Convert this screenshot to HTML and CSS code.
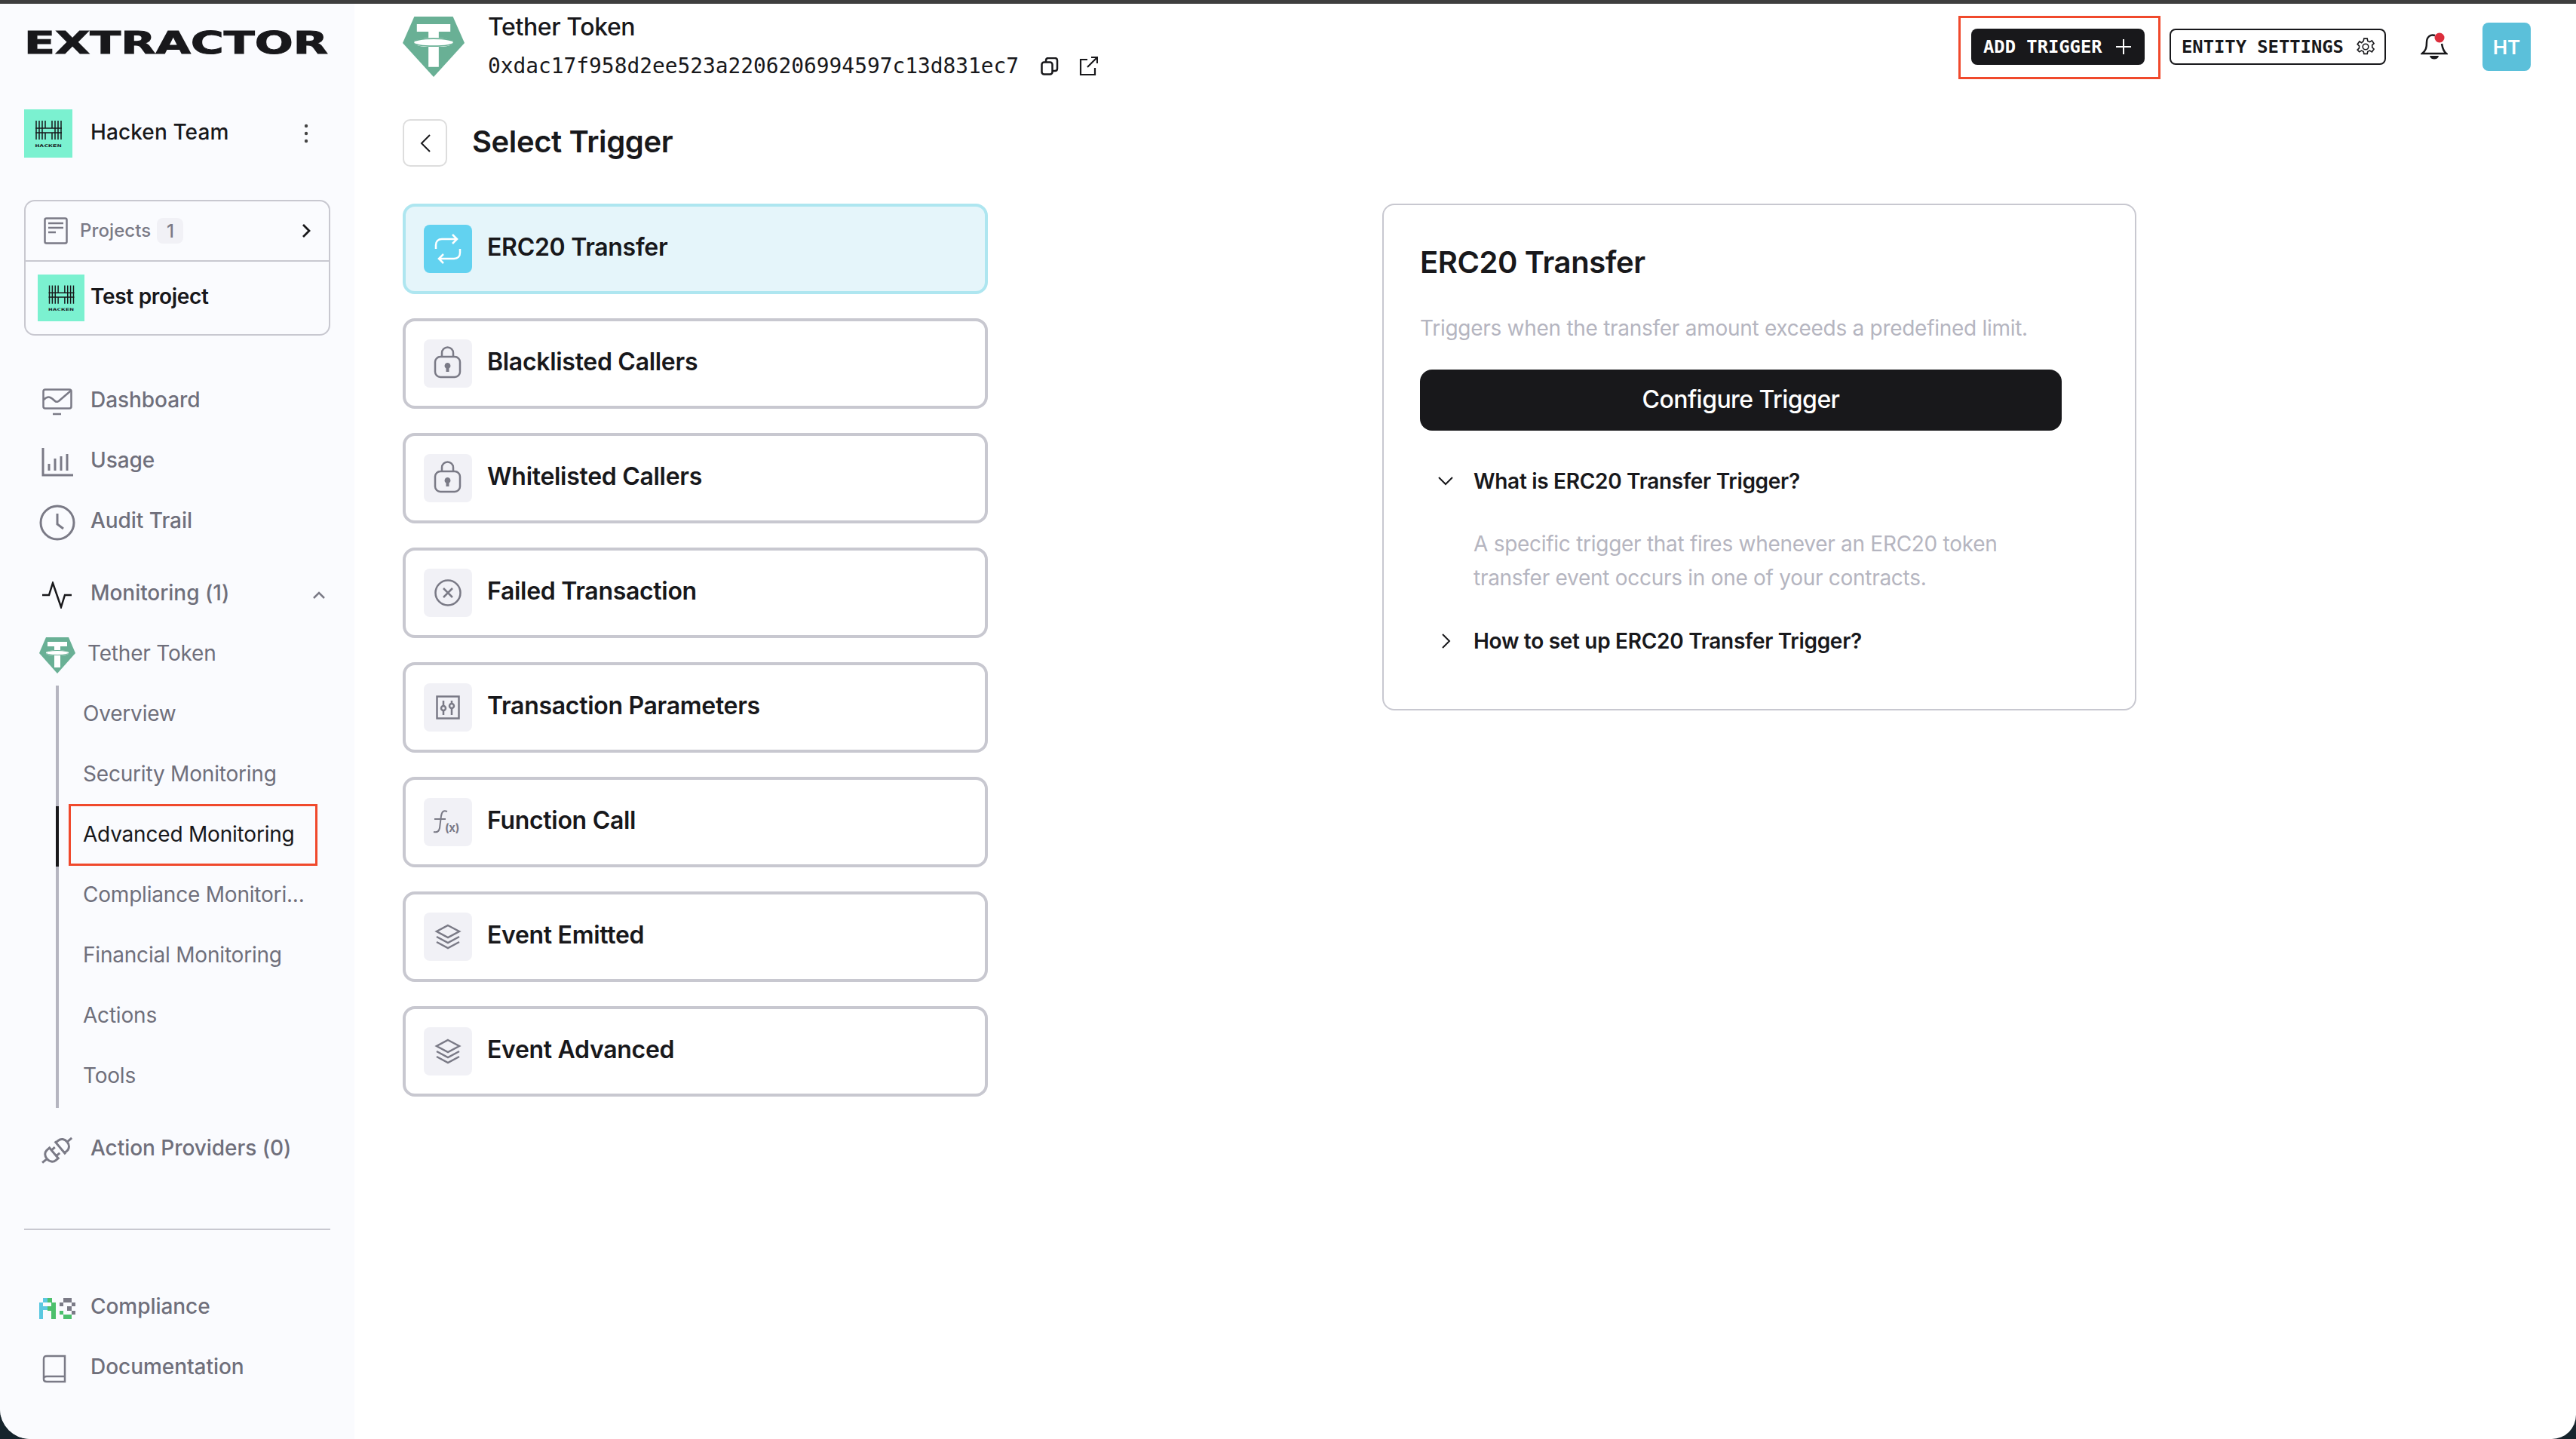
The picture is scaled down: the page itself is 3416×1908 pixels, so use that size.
FILE: index.html
```html
<!DOCTYPE html>
<html>
<head>
<meta name="viewport" content="width=device-width, initial-scale=1">
<title>Select Trigger</title>
<link rel="stylesheet" href="styles.css">
</head>
<body>
<svg class="defs" width="0" height="0">
  <symbol id="hacken" viewBox="0 0 64 64">
    <g fill="none" stroke="#18181b" stroke-width="1.500">
      <path d="M16 15v25M20 15v25M24 15v25M41 15v25M45 15v25M49 15v25"/>
      <path d="M15 25h35M15 31h35"/>
      <path d="M28 15v10M37 15v10M28 31v9M37 31v9"/>
    </g>
  </symbol>
  <symbol id="tether" viewBox="0 0 48 48">
    <path fill="#69b095" d="M9 0h30l9 21-24 27L0 21z"/>
    <path fill="#fff" d="M11 6h26v6H28v5c3 0 6 1 11 2v3c-5 2-8 2-11 2v16h-8V24c-3 0-6 0-11-2v-3c5-1 8-2 11-2v-5h-9z"/>
    <ellipse cx="24" cy="20.500" rx="16" ry="3" fill="none" stroke="#69b095" stroke-width="1"/>
  </symbol>
  <symbol id="lock" viewBox="0 0 64 64">
    <g fill="none" stroke="#7a7a86" stroke-width="2.500">
      <rect x="15" y="23" width="33" height="27" rx="7"/>
      <path d="M24 23v-5a7.500 7.500 0 0 1 15 0v5"/>
    </g>
    <path fill="#7a7a86" d="M31.500 31a4 4 0 0 1 2 7.400V43h-4v-4.600a4 4 0 0 1 2-7.400z"/>
  </symbol>
  <symbol id="stack" viewBox="0 0 64 64">
    <g fill="none" stroke="#7a7a86" stroke-width="2.500">
      <path d="M32 17l15 8-15 8-15-8z"/>
      <path d="M17 32l15 8 15-8M17 39l15 8 15-8"/>
    </g>
  </symbol>
</svg>

<div class="window">
  <div class="top-edge"></div>
  <div class="app">

    <aside class="sidebar">
      <svg class="logo" viewBox="0 0 403 29" role="img"><text x="0" y="29" textLength="403" lengthAdjust="spacingAndGlyphs">EXTRACTOR</text></svg>

      <div class="team">
        <svg class="avatar-logo" viewBox="0 0 64 64"><use href="#hacken" width="64" height="64"/><text class="hacken-word" x="32" y="50" text-anchor="middle" textLength="35" lengthAdjust="spacingAndGlyphs">HACKEN</text></svg>
        <span class="team-name">Hacken Team</span>
        <svg class="kebab" width="8" height="26" viewBox="0 0 8 26"><circle cx="4" cy="3" r="2.200"/><circle cx="4" cy="13" r="2.200"/><circle cx="4" cy="23" r="2.200"/></svg>
      </div>

      <div class="projects">
        <div class="projects-head">
          <svg width="32" height="36" viewBox="0 0 32 36" fill="none" stroke="#7a7a86" stroke-width="2.500"><rect x="1.500" y="1.500" width="29" height="33" rx="2"/><path d="M6 8h20M6 14h20M6 20h10"/></svg>
          <span class="projects-label">Projects</span>
          <span class="badge">1</span>
          <svg class="push" width="12" height="20" viewBox="0 0 12 20" fill="none" stroke="#18181b" stroke-width="2.800"><path d="M2 2l8 8-8 8"/></svg>
        </div>
        <div class="projects-item">
          <svg class="avatar-logo small" viewBox="0 0 64 64"><use href="#hacken" width="64" height="64"/><text class="hacken-word" x="32" y="50" text-anchor="middle" textLength="35" lengthAdjust="spacingAndGlyphs">HACKEN</text></svg>
          <span class="project-name">Test project</span>
        </div>
      </div>

      <nav class="nav">
        <a class="nav-row">
          <span class="nav-icon"><svg width="40" height="36" viewBox="0 0 40 36" fill="none" stroke="#7a7a86" stroke-width="2.500"><rect x="1.500" y="1.500" width="37" height="25" rx="2.500"/><path d="M2 15c6-6 10-3 14 1 3 3 5 2 8-1l14-12M14 34h11"/></svg></span>
          Dashboard
        </a>
        <a class="nav-row">
          <span class="nav-icon"><svg width="42" height="38" viewBox="0 0 42 38" fill="none" stroke="#7a7a86" stroke-width="3"><path d="M2 0v36h40M10 30v-9M18 30V14M26 30V11M34 30V8"/></svg></span>
          Usage
        </a>
        <a class="nav-row">
          <span class="nav-icon"><svg width="48" height="48" viewBox="0 0 48 48" fill="none" stroke="#7a7a86" stroke-width="3"><circle cx="24" cy="24" r="22"/><path d="M24 12v14l8 6"/></svg></span>
          Audit Trail
        </a>
        <a class="nav-row nav-gap">
          <span class="nav-icon"><svg width="40" height="36" viewBox="0 0 40 36" fill="none" stroke="#18181b" stroke-width="2.500"><path d="M0 18h9l5-16 11 32 5-16h9"/></svg></span>
          Monitoring (1)
          <svg class="push chevron-up" width="18" height="12" viewBox="0 0 18 12" fill="none" stroke="#7a7a86" stroke-width="2.500"><path d="M2 10l7-7 7 7"/></svg>
        </a>
        <a class="nav-row entity">
          <span class="nav-icon"><svg width="48" height="48"><use href="#tether" width="48" height="48"/></svg></span>
          Tether Token
        </a>
        <div class="sub-list">
          <a class="sub-row">Overview</a>
          <a class="sub-row">Security Monitoring</a>
          <a class="sub-row active">Advanced Monitoring<span class="mark mark-nav"></span></a>
          <a class="sub-row">Compliance Monitori...</a>
          <a class="sub-row">Financial Monitoring</a>
          <a class="sub-row">Actions</a>
          <a class="sub-row">Tools</a>
        </div>
        <a class="nav-row nav-gap">
          <span class="nav-icon"><svg width="44" height="44" viewBox="0 0 44 44" fill="none" stroke="#7a7a86" stroke-width="3"><g transform="rotate(-40 22 22)"><path d="M16 13h-4c-5 0-8 4-8 9s3 9 8 9h4zM16 17h6M16 27h6M-4 22h8"/><path d="M27 11v22M27 13h4c5 0 8 4 8 9s-3 9-8 9h-4M39 22h8"/></g></svg></span>
          Action Providers (0)
        </a>
      </nav>

      <div class="divider"></div>

      <nav class="nav-bottom">
        <a class="nav-row">
          <span class="nav-icon"><svg width="48" height="28" viewBox="0 0 48 28"><path fill="#5bc8e0" d="M0 6h5V0h6v6H5v5h6v5H5v12H0z"/><path fill="#4cc06c" d="M11 0h6v6h5v22h-6V17h-5v-6h5V6h-5zM27 17h5v5h-5zM32 22h11v6H32z"/><path fill="#7a7a86" d="M32 0h11v6H32zM27 6h5v5h-5zM43 6h5v5h-5zM37 11h6v6h-6zM43 17h5v5h-5z"/></svg></span>
          Compliance
        </a>
        <a class="nav-row">
          <span class="nav-icon"><svg class="book" width="32" height="38" viewBox="0 0 32 38" fill="none" stroke="#7a7a86" stroke-width="2.500"><path d="M30 2H6C3 2 2 3 2 6v27c0 2 1 3 4 3h24zM2 33c0-3 1-4 4-4h24"/></svg></span>
          Documentation
        </a>
      </nav>
    </aside>

    <main class="main">
      <header class="topbar">
        <svg class="token-icon" width="82" height="80" viewBox="0 0 48 48" preserveAspectRatio="none"><use href="#tether" width="48" height="48"/></svg>
        <div class="token-info">
          <div class="token-name">Tether Token</div>
          <div class="token-address">
            <span>0xdac17f958d2ee523a2206206994597c13d831ec7</span>
            <svg width="24" height="24" viewBox="0 0 24 24" fill="none" stroke="#18181b" stroke-width="2.500"><rect x="1.500" y="6.500" width="14" height="16" rx="3"/><path d="M7 6V4c0-2 1-3 3-3h9c2 0 3 1 3 3v11c0 2-1 3-3 3h-3"/></svg>
            <svg width="25" height="25" viewBox="0 0 25 25" fill="none" stroke="#18181b" stroke-width="2.200"><path d="M11 4H2v20h19v-9M11 14L24 1M16 1h8v8"/></svg>
          </div>
        </div>
        <div class="top-actions">
          <button class="btn-dark">ADD TRIGGER
            <svg width="20" height="20" viewBox="0 0 20 20" stroke="#fff" stroke-width="2"><path d="M10 0v20M0 10h20"/></svg>
            <span class="mark mark-add"></span>
          </button>
          <button class="btn-line">ENTITY SETTINGS
            <svg width="26" height="26" viewBox="0 0 24 24" fill="none" stroke="#18181b" stroke-width="1.500"><circle cx="12" cy="12" r="3.500"/><path d="M10 2h4l.6 3 2.500 1.100 2.600-1.600 2.500 3.500-2.200 2 .1 2.800 2.100 2-2.500 3.500-2.600-1.600-2.500 1.100-.6 2.800h-4l-.6-2.800-2.500-1.100-2.600 1.600L2 15.800l2.100-2 .1-2.800-2.200-2 2.500-3.500 2.600 1.600L9.400 5z"/></svg>
          </button>
          <svg class="bell" width="36" height="38" viewBox="0 0 36 38"><path fill="none" stroke="#18181b" stroke-width="2.500" d="M19 4c-6-2-11 2-11 9 0 7-1 11-6 15h32c-4-3-5-7-6-13"/><path fill="#18181b" d="M12 31h12c-1 6-11 6-12 0z"/><circle cx="25" cy="7" r="6.500" fill="#dc2e3c"/></svg>
          <div class="user">HT</div>
        </div>
      </header>

      <div class="title-row">
        <button class="back"><svg width="14" height="24" viewBox="0 0 14 24" fill="none" stroke="#18181b" stroke-width="2"><path d="M13 1L2 12l11 11"/></svg></button>
        <h1>Select Trigger</h1>
      </div>

      <div class="columns">
        <div class="trigger-list">
          <div class="trigger selected">
            <span class="tile"><svg width="36" height="40" viewBox="0 0 36 40" fill="none" stroke="#fff" stroke-width="2.500"><path d="M24 1l6 6-6 6M30 7H10C5 7 2 10 2 15v5M12 39l-6-6 6-6M6 33h20c5 0 8-3 8-8v-5"/></svg></span>
            ERC20 Transfer
          </div>
          <div class="trigger">
            <span class="tile"><svg width="64" height="64"><use href="#lock" width="64" height="64"/></svg></span>
            Blacklisted Callers
          </div>
          <div class="trigger">
            <span class="tile"><svg width="64" height="64"><use href="#lock" width="64" height="64"/></svg></span>
            Whitelisted Callers
          </div>
          <div class="trigger">
            <span class="tile"><svg width="36" height="36" viewBox="0 0 36 36" fill="none" stroke="#7a7a86" stroke-width="2.500"><circle cx="18" cy="18" r="16.500"/><path d="M12 12l12 12M24 12L12 24"/></svg></span>
            Failed Transaction
          </div>
          <div class="trigger">
            <span class="tile"><svg width="32" height="32" viewBox="0 0 32 32" fill="none" stroke="#7a7a86" stroke-width="2.500"><rect x="1.500" y="1.500" width="29" height="29"/><path d="M10 7v7M10 20v6M21 7v4M21 17v9"/><circle cx="10" cy="17" r="3"/><circle cx="21" cy="14" r="3"/></svg></span>
            Transaction Parameters
          </div>
          <div class="trigger">
            <span class="tile"><svg class="fx" width="40" height="32" viewBox="0 0 40 32"><path fill="none" stroke="#7a7a86" stroke-width="2" d="M19 2c-5-2-7 0-8 6l-2 16c-1 5-4 6-8 5M2 12h15"/><text x="16" y="29">(x)</text></svg></span>
            Function Call
          </div>
          <div class="trigger">
            <span class="tile"><svg width="64" height="64"><use href="#stack" width="64" height="64"/></svg></span>
            Event Emitted
          </div>
          <div class="trigger">
            <span class="tile"><svg width="64" height="64"><use href="#stack" width="64" height="64"/></svg></span>
            Event Advanced
          </div>
        </div>

        <section class="details">
          <h2>ERC20 Transfer</h2>
          <p class="muted lead">Triggers when the transfer amount exceeds a predefined limit.</p>
          <button class="btn-configure">Configure Trigger</button>
          <div class="faq-q">
            <svg width="20" height="12" viewBox="0 0 20 12" fill="none" stroke="#18181b" stroke-width="2"><path d="M1 1l9 9 9-9"/></svg>
            What is ERC20 Transfer Trigger?
          </div>
          <p class="muted faq-a">A specific trigger that fires whenever an ERC20 token<br>transfer event occurs in one of your contracts.</p>
          <div class="faq-q">
            <svg width="20" height="20" viewBox="0 0 20 20" fill="none" stroke="#18181b" stroke-width="2"><path d="M6 1l9 9-9 9"/></svg>
            How to set up ERC20 Transfer Trigger?
          </div>
        </section>
      </div>
    </main>
  </div>
</div>
</body>
</html>
```

FILE: styles.css
```css
* {
	box-sizing: border-box;
}
html, body {
	margin: 0;
	height: 100%;
}
body {
	background: #16242c;
	font-family: Inter, "Liberation Sans", sans-serif;
	color: #18181b;
}
.defs {
	position: absolute;
}
.hacken-word {
	font-family: "DejaVu Sans Mono", monospace;
	font-weight: 700;
	font-size: 5px;
	fill: #18181b;
}
.window {
	height: 1908px;
	background: #fff;
	border-radius: 0 0 32px 40px;
	overflow: hidden;
	display: flex;
	flex-direction: column;
}
.top-edge {
	height: 5px;
	flex: none;
	background: #3e3e3e;
}
.app {
	flex: 1;
	display: flex;
	min-height: 0;
}

/* sidebar */
.sidebar {
	width: 470px;
	flex: none;
	background: #fafbfe;
	padding: 37px 32px 0;
	display: flex;
	flex-direction: column;
}
.logo {
	width: 403px;
	height: 29px;
	display: block;
	overflow: visible;
}
.logo text {
	font-family: "DejaVu Sans", sans-serif;
	font-weight: 700;
	font-size: 40px;
	fill: #18181b;
	stroke: #18181b;
	stroke-width: 1px;
}
.team {
	margin-top: 74px;
	height: 64px;
	display: flex;
	align-items: center;
}
.avatar-logo {
	width: 64px;
	height: 64px;
	background: #7bf1d0;
	flex: none;
}
.avatar-logo.small {
	width: 62px;
	height: 62px;
}
.team-name {
	margin: 0 0 4px 24px;
	font-size: 28px;
	font-weight: 500;
	letter-spacing: 0.1px;
}
.kebab {
	margin-left: auto;
	margin-right: 28px;
	fill: #444;
}
.projects {
	margin-top: 56px;
	height: 180px;
	border: 2px solid #c8c8d0;
	border-radius: 14px;
}
.projects-head {
	height: 80px;
	padding: 0 24px;
	display: flex;
	align-items: center;
	border-bottom: 2px solid #c8c8d0;
}
.projects-label {
	margin: 0 0 2px 16px;
	font-size: 24px;
	font-weight: 500;
	letter-spacing: 0.1px;
	color: #7a7a86;
}
.badge {
	margin-left: 8px;
	width: 35px;
	height: 34px;
	border-radius: 8px;
	background: #f1f1f6;
	color: #7a7a86;
	font-size: 24px;
	font-weight: 500;
	display: flex;
	align-items: center;
	justify-content: center;
}
.push {
	margin-left: auto;
}
.projects-item {
	height: 96px;
	padding-left: 16px;
	display: flex;
	align-items: center;
}
.project-name {
	margin: 0 0 4px 8px;
	font-size: 28px;
	font-weight: 600;
	letter-spacing: -0.3px;
}
.nav {
	margin-top: 48px;
}
.nav-row {
	height: 80px;
	display: flex;
	align-items: center;
	padding-bottom: 6px;
	font-size: 28px;
	font-weight: 500;
	letter-spacing: -0.05px;
	color: #6f6f7b;
}
.nav-gap {
	margin-top: 16px;
}
.nav-icon {
	width: 88px;
	margin-top: 6px;
	height: 0;
	flex: none;
	display: flex;
	align-items: center;
	justify-content: center;
}
.nav-icon svg {
	flex: none;
}
.nav-icon .book {
	margin-right: 8px;
}
.chevron-up {
	margin-right: 6px;
	margin-top: 6px;
}
.entity {
	font-weight: 400;
	letter-spacing: -0.2px;
}
.entity .nav-icon {
	width: 84px;
	justify-content: flex-start;
	padding-left: 20px;
}
.sub-list {
	margin-left: 42px;
	border-left: 4px solid #b5b5c0;
}
.sub-row {
	position: relative;
	height: 80px;
	padding: 0 0 6px 32px;
	display: flex;
	align-items: center;
	font-size: 28px;
	letter-spacing: -0.2px;
	color: #6f6f7b;
	white-space: nowrap;
}
.sub-row.active {
	color: #18181b;
}
.sub-row.active::before {
	content: "";
	position: absolute;
	left: -4px;
	top: 0;
	bottom: 0;
	width: 4px;
	background: #18181b;
}
.mark {
	position: absolute;
	border: 3px solid #f0492c;
	pointer-events: none;
}
.mark-nav {
	left: 13px;
	top: -3px;
	width: 330px;
	height: 82px;
}
.divider {
	margin-top: 64px;
	height: 2px;
	background: #c8c8d0;
}
.nav-bottom {
	margin-top: 64px;
}

/* main */
.main {
	flex: 1;
	padding: 0 60px 0 64px;
	min-width: 0;
}
.topbar {
	height: 105px;
	display: flex;
	align-items: flex-start;
}
.token-icon {
	margin-top: 17px;
	flex: none;
}
.token-info {
	margin-left: 31px;
	padding-top: 12px;
}
.token-name {
	font-size: 32px;
	font-weight: 500;
	line-height: 38px;
	letter-spacing: -0.4px;
}
.token-address {
	margin-top: 20px;
	display: flex;
	align-items: center;
	font-family: "DejaVu Sans Mono", monospace;
	font-size: 27.850px;
	line-height: 24px;
}
.token-address svg:first-of-type {
	margin-left: 29px;
}
.token-address svg + svg {
	margin-left: 27px;
}
.top-actions {
	margin-left: auto;
	margin-top: 25px;
	display: flex;
	align-items: center;
}
.btn-dark, .btn-line {
	position: relative;
	height: 48px;
	border-radius: 8px;
	font-family: "DejaVu Sans Mono", monospace;
	font-size: 23.800px;
	font-weight: 700;
	white-space: nowrap;
	display: flex;
	align-items: center;
}
.btn-dark svg, .btn-line svg {
	flex: none;
}
.btn-dark {
	width: 230px;
	padding: 0 16px;
	border: 0;
	background: #18181b;
	color: #fff;
	gap: 18px;
}
.btn-line {
	margin-left: 33px;
	width: 287px;
	padding: 0 12px 0 14px;
	border: 2px solid #18181b;
	background: #fff;
	color: #18181b;
	gap: 16px;
}
.mark-add {
	left: -17px;
	top: -17px;
	width: 268px;
	height: 84px;
}
.bell {
	margin-left: 46px;
}
.user {
	margin-left: 46px;
	width: 64px;
	height: 64px;
	border-radius: 8px;
	background: #5bc0da;
	color: #fff;
	font-size: 26px;
	font-weight: 600;
	display: flex;
	align-items: center;
	justify-content: center;
}
.title-row {
	margin-top: 48px;
	display: flex;
	align-items: center;
}
.back {
	width: 59px;
	height: 63px;
	padding: 0;
	border: 2px solid #ddd;
	border-radius: 10px;
	background: #fff;
	display: flex;
	align-items: center;
	justify-content: center;
}
h1 {
	margin: 0 0 4px 33px;
	font-size: 40px;
	font-weight: 600;
	letter-spacing: -0.4px;
}
.columns {
	margin-top: 49px;
	display: flex;
	align-items: flex-start;
}
.trigger-list {
	width: 776px;
	flex: none;
	display: flex;
	flex-direction: column;
	gap: 32px;
}
.trigger {
	height: 120px;
	border: 4px solid #c8c8d0;
	border-radius: 16px;
	padding: 0 0 5px 24px;
	display: flex;
	align-items: center;
	gap: 20px;
	font-size: 32px;
	font-weight: 600;
	letter-spacing: -0.3px;
}
.trigger.selected {
	background: #e5f5fa;
	border-color: #aee6f0;
}
.tile {
	width: 64px;
	height: 64px;
	margin-top: 5px;
	border-radius: 8px;
	background: #f1f1f6;
	flex: none;
	display: flex;
	align-items: center;
	justify-content: center;
}
.selected .tile {
	background: #62d2f0;
}
.fx text {
	font-size: 15px;
	font-weight: 700;
	fill: #7a7a86;
}
.details {
	margin-left: 523px;
	width: 1000px;
	height: 672px;
	border: 2px solid #c8c8d0;
	border-radius: 16px;
	padding: 52px 48px 0;
}
h2 {
	margin: 0;
	font-size: 40px;
	line-height: 48px;
	font-weight: 600;
	letter-spacing: -0.4px;
}
.muted {
	color: #b5b5c0;
	font-size: 28px;
	letter-spacing: -0.28px;
	margin: 0;
}
.lead {
	margin-top: 46px;
	line-height: 34px;
}
.btn-configure {
	margin-top: 38px;
	width: 851px;
	height: 81px;
	padding: 0 0 3px;
	border: 0;
	border-radius: 16px;
	background: #18181b;
	color: #fff;
	font-family: inherit;
	font-size: 32px;
	font-weight: 500;
	letter-spacing: -0.55px;
}
.faq-q {
	height: 40px;
	margin-top: 47px;
	padding-left: 24px;
	display: flex;
	align-items: center;
	gap: 27px;
	font-size: 28px;
	font-weight: 600;
	letter-spacing: -0.3px;
}
.faq-a {
	margin-top: 41px;
	padding-left: 71px;
	line-height: 45px;
}
.faq-a + .faq-q {
	margin-top: 41px;
}
```
